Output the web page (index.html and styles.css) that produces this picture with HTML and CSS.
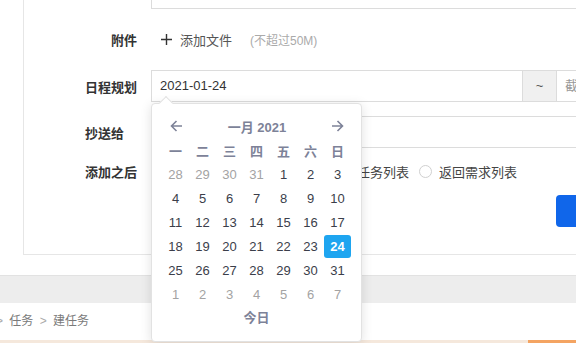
FILE: index.html
```html
<!DOCTYPE html>
<html lang="zh-CN">
<head>
    <meta charset="UTF-8">
    <title>建任务</title>
    <link rel="stylesheet" href="styles.css">
</head>
<body>
    <div class="page">
        <div class="card">
            <div class="form">
                <div class="row row-tail">
                    <div class="label"></div>
                    <div class="textarea-tail"></div>
                </div>

                <div class="row row-attach">
                    <div class="label">附件</div>
                    <div class="field">
                        <span class="add-file">
                            <svg class="plus" width="11" height="11" viewBox="0 0 11 11"><path d="M5.5 0v11M0 5.5h11" stroke="#333" stroke-width="1.4"/></svg>
                            添加文件
                        </span>
                        <span class="hint">(不超过50M)</span>
                    </div>
                </div>

                <div class="row">
                    <div class="label">日程规划</div>
                    <div class="field date-range">
                        <div class="input date-start">2021-01-24</div>
                        <div class="addon">~</div>
                        <div class="input date-end placeholder">截止日期</div>
                    </div>
                </div>

                <div class="row">
                    <div class="label label-cc">抄送给</div>
                    <div class="field">
                        <div class="input input-wide"></div>
                    </div>
                </div>

                <div class="row row-radio">
                    <div class="label">添加之后</div>
                    <div class="field radios">
                        <label class="radio"><span class="dot"></span>继续添加下一个新任务</label>
                        <label class="radio"><span class="dot"></span>返回任务列表</label>
                        <label class="radio"><span class="dot"></span>返回需求列表</label>
                    </div>
                </div>

                <div class="actions">
                    <button class="btn-primary">保存</button>
                </div>
            </div>
        </div>

        <div class="gray-band"></div>

        <div class="crumbs">
            <span class="sep">&gt;</span> 任务 <span class="sep">&gt;</span> 建任务
        </div>

        <div class="bottom-line"><span class="bottom-accent"></span></div>

        <!-- 日期选择弹层 -->
        <div class="datepicker">
            <div class="dp-arrow"></div>
            <div class="dp-head">
                <svg width="13" height="12" viewBox="0 0 13 12"><path d="M12 6H1.5M6.5 1L1.5 6l5 5" fill="none" stroke="#7d8298" stroke-width="1.6"/></svg>
                <span class="dp-title">一月 2021</span>
                <svg width="13" height="12" viewBox="0 0 13 12"><path d="M1 6h10.5M6.5 1l5 5-5 5" fill="none" stroke="#7d8298" stroke-width="1.6"/></svg>
            </div>
            <div class="dp-grid" id="dpGrid">
                <span class="wk">一</span><span class="wk">二</span><span class="wk">三</span><span class="wk">四</span><span class="wk">五</span><span class="wk">六</span><span class="wk">日</span>
            </div>
            <div class="dp-today">今日</div>
        </div>
    </div>

    <script>
        // 生成日历格子
        var grid = document.getElementById('dpGrid');
        var days = [];
        [28, 29, 30, 31].forEach(function (d) { days.push({ d: d, cls: 'other' }); });
        for (var i = 1; i <= 31; i++) {
            days.push({ d: i, cls: i === 24 ? 'sel' : '' });
        }
        for (var j = 1; j <= 7; j++) {
            days.push({ d: j, cls: 'other' });
        }
        days.forEach(function (item) {
            var cell = document.createElement('span');
            cell.className = 'day ' + item.cls;
            cell.textContent = item.d;
            grid.appendChild(cell);
        });
    </script>
</body>
</html>
```

FILE: styles.css
```css
* {
    margin: 0;
    padding: 0;
    box-sizing: border-box;
}

body {
    font-family: "Liberation Sans", "Noto Sans CJK SC", sans-serif;
    font-size: 13px;
    color: #333;
    background: #fff;
    width: 576px;
    height: 343px;
    overflow: hidden;
}

.page {
    position: relative;
    width: 800px;
}

.card {
    margin-left: 23px;
    border-left: 1px solid #e6e6e6;
    border-bottom: 1px solid #e6e6e6;
    padding-bottom: 27px;
}

.form {
    display: flex;
    flex-direction: column;
    gap: 14px;
}

.row {
    display: flex;
    align-items: center;
    min-height: 32px;
}

.row-tail {
    min-height: 9px;
}

.row-attach {
    min-height: 33px;
}

.row-radio {
    min-height: 19px;
}

.label {
    width: 113px;
    margin-right: 14px;
    text-align: right;
    font-weight: bold;
    color: #333;
    flex-shrink: 0;
}

.label-cc {
    padding-right: 13px;
}

.field {
    flex: 1;
    display: flex;
    align-items: center;
}

.textarea-tail {
    flex: 1;
    height: 9px;
    border: 1px solid #dcdcdc;
    border-top: none;
}

.add-file {
    display: flex;
    align-items: center;
    gap: 8px;
    margin-left: 10px;
    color: #555;
}

.hint {
    margin-left: 18px;
    font-size: 12px;
    color: #aaa;
}

.input {
    height: 32px;
    border: 1px solid #dcdcdc;
    padding: 0 8px;
    line-height: 30px;
    color: #333;
    background: #fff;
}

.date-start {
    width: 372px;
}

.addon {
    width: 33px;
    height: 32px;
    line-height: 30px;
    text-align: center;
    background: #f0f0f0;
    border-top: 1px solid #dcdcdc;
    border-bottom: 1px solid #dcdcdc;
    color: #555;
}

.date-end {
    width: 200px;
}

.placeholder {
    color: #999;
}

.input-wide {
    flex: 1;
}

.radios {
    gap: 10px;
}

.radio {
    display: flex;
    align-items: center;
    gap: 7px;
    color: #444;
    white-space: nowrap;
}

.dot {
    width: 13px;
    height: 13px;
    border: 1px solid #d0d0d0;
    border-radius: 50%;
    background: #fff;
}

.actions {
    padding-left: 532px;
}

.btn-primary {
    width: 80px;
    height: 32px;
    border: none;
    border-radius: 4px;
    background: #1066ea;
    color: #fff;
    font-family: inherit;
    font-size: 13px;
}

.gray-band {
    margin-top: 20px;
    height: 28px;
    background: #ededed;
    border-top: 1px solid #e2e2e2;
}

.crumbs {
    height: 37px;
    line-height: 36px;
    margin-left: -7px;
    font-size: 12px;
    color: #7a7a7a;
}

.crumbs .sep {
    margin: 0 3px;
    color: #aaa;
}

.bottom-line {
    height: 3px;
    background: #f5e8dc;
    display: flex;
}

.bottom-accent {
    margin-left: 528px;
    width: 60px;
    background: #f4a462;
}

/* 日期选择弹层 */
.datepicker {
    position: absolute;
    top: 103px;
    left: 151px;
    width: 211px;
    padding: 10px 10px 11px;
    background: #fff;
    border: 1px solid #e2e2e2;
    border-radius: 4px;
    box-shadow: 0 2px 12px rgba(0, 0, 0, 0.12);
}

.dp-arrow {
    position: absolute;
    top: -6px;
    left: 9px;
    width: 10px;
    height: 10px;
    background: #fff;
    border-top: 1px solid #e2e2e2;
    border-left: 1px solid #e2e2e2;
    transform: rotate(45deg);
}

.dp-head {
    height: 24px;
    display: flex;
    align-items: center;
    justify-content: space-between;
    padding: 0 7px 0 8px;
}

.dp-title {
    font-weight: bold;
    color: #7d8298;
}

.dp-grid {
    display: grid;
    grid-template-columns: repeat(7, 27px);
    grid-auto-rows: 24px;
}

.dp-grid span {
    display: flex;
    align-items: center;
    justify-content: center;
}

.wk {
    font-weight: bold;
    color: #7d8298;
}

.day {
    color: #3b3e4a;
}

.day.other {
    color: #a3a3a3;
}

.day.sel {
    height: 23px;
    align-self: center;
    background: #1ea5f0;
    color: #fff;
    font-weight: bold;
    border-radius: 3px;
}

.dp-today {
    height: 24px;
    line-height: 24px;
    text-align: center;
    font-weight: bold;
    color: #7d8298;
}
```
